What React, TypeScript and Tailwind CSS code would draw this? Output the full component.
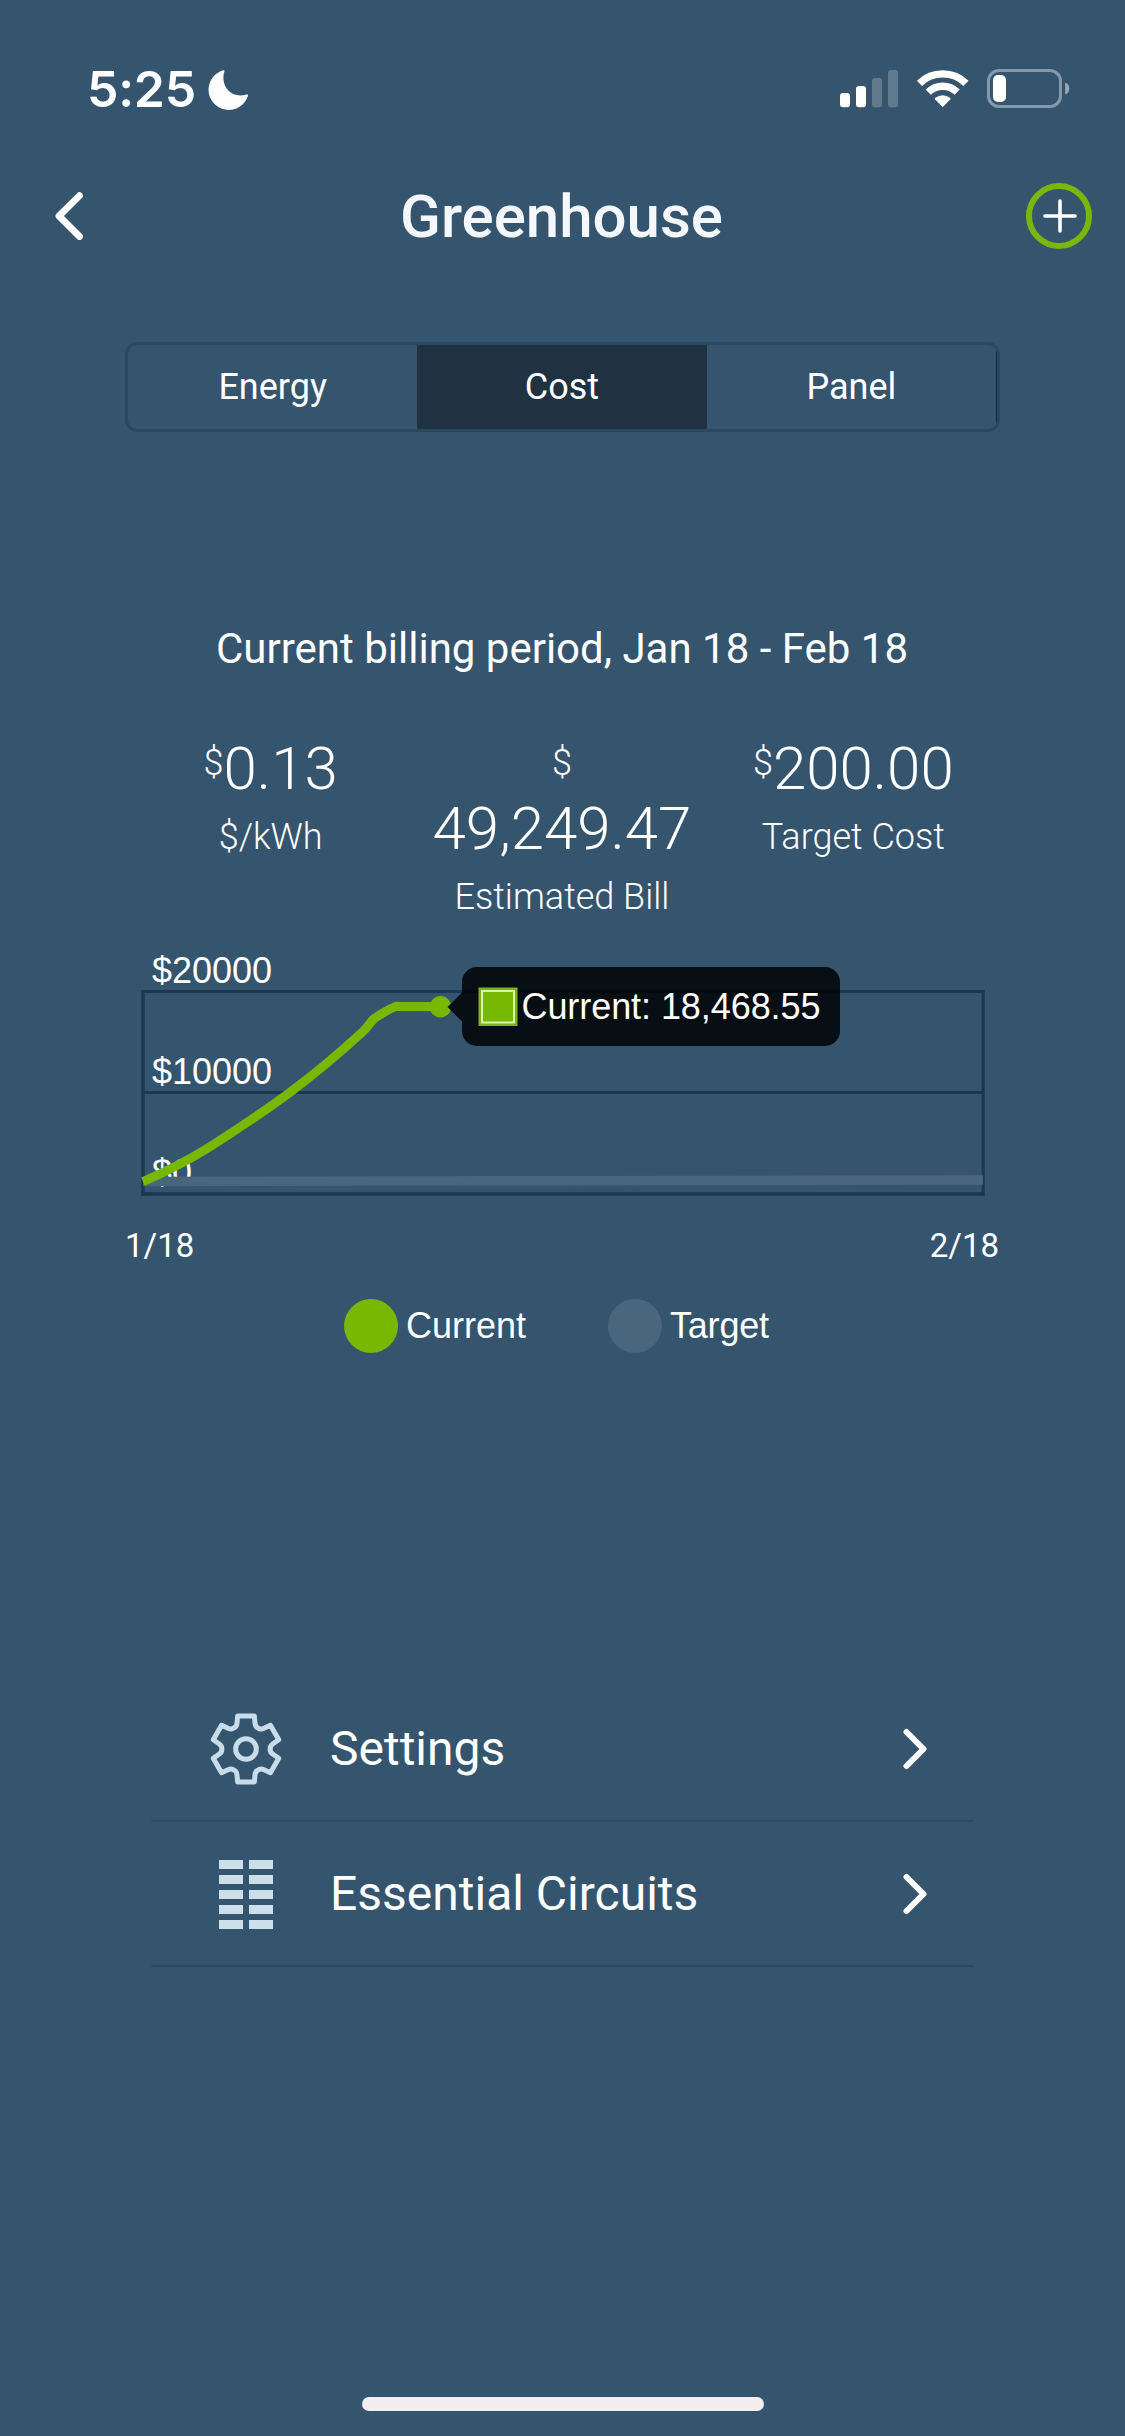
import React from "react";

const tabs = ["Energy", "Cost", "Panel"];
const stats = [
  { value: "0.13", label: "$/kWh", wrap: false },
  { value: "49,249.47", label: "Estimated Bill", wrap: true },
  { value: "200.00", label: "Target Cost", wrap: false },
];

function gearPath() {
  const rot = (x: number, y: number, k: number) => {
    const a = (k * Math.PI) / 3;
    return `${(x * Math.cos(a) - y * Math.sin(a)).toFixed(2)} ${(x * Math.sin(a) + y * Math.cos(a)).toFixed(2)}`;
  };
  let d = `M${rot(-27, -78, 0)}`;
  for (let k = 0; k < 6; k++) {
    d += `L${rot(-25, -99, k)}L${rot(25, -99, k)}L${rot(27, -78, k)}`;
    d += `Q${rot(28, -66, k)} ${rot(36.5, -63, k)}Q${rot(-28, -66, k + 1)} ${rot(-27, -78, k + 1)}`;
  }
  return d + "Z";
}

function Gear() {
  return (
    <svg className="h-[72px] w-[72px]" viewBox="-108 -108 216 216" fill="none" stroke="#c9dcea" strokeWidth="15" strokeLinejoin="round">
      <path d={gearPath()} />
      <circle r="31" />
    </svg>
  );
}

function Breakers() {
  return (
    <div className="mt-[2px] grid h-[69px] w-[54px] grid-cols-2 gap-[6px]">
      {Array.from({ length: 10 }, (_, i) => (
        <span key={i} className="h-[9px] bg-[#cddfeb]" />
      ))}
    </div>
  );
}

function StatusBar() {
  return (
    <div className="flex h-[178px] items-center justify-between pr-[55px] pl-[87px]">
      <div className="flex items-center gap-[13px]">
        <span className="w-[108px] font-[Inter,sans-serif] text-[50px] leading-[60px] font-semibold tracking-[-0.3px] whitespace-nowrap">5:25</span>
        <svg className="h-[42px] w-[42px]" viewBox="208 68 42 42" fill="white">
          <path d="M223.5 70.2 C224.4 69.9 224.8 70.6 224.4 71.6 C220 84.500 230 99.500 246.500 94.600 C248 94.200 248.400 95 247.900 96.100 A20.200 20.200 0 1 1 223.500 70.200Z" />
        </svg>
      </div>
      <div className="flex items-center">
        <svg className="h-[40px] w-[230px]" viewBox="840 69 230 40">
          <g fill="white">
            <rect x="840" y="93" width="10" height="14.200" rx="3" />
            <rect x="856" y="86" width="10" height="21.200" rx="3" />
            <g fillOpacity="0.22">
              <rect x="872" y="78" width="10" height="29.200" rx="3" />
              <rect x="888" y="70" width="10" height="37.200" rx="3" />
            </g>
            <path d="M942.700 107.200 L935 99.200 Q934.600 98.400 935.300 97.800 A12 12 0 0 1 950.100 97.800 Q950.800 98.400 950.400 99.200Z" />
            <rect x="993" y="75" width="13" height="27" rx="5" />
            <path d="M1065.200 82.500 Q1069.200 84 1069.200 88.500 T1065.200 94.500Z" fillOpacity="0.5" />
          </g>
          <g fill="none" stroke="white">
            <path d="M919.500 83.300 A33.300 33.300 0 0 1 965.900 83.300" strokeWidth="7.400" />
            <path d="M928.200 92.200 A20.700 20.700 0 0 1 957.200 92.200" strokeWidth="7.400" />
            <rect x="988.500" y="70.500" width="72" height="36" rx="10.500" strokeWidth="3" strokeOpacity="0.4" />
          </g>
        </svg>
      </div>
    </div>
  );
}

function Chart() {
  return (
    <svg className="mt-[11px] block h-[276px] w-full font-['Liberation_Sans',Arial,sans-serif]" viewBox="125 939 874 276" fontSize="36">
      <g fill="none" stroke="#1f3650">
        <path d="M143 991.500H983M143 1092.500H983" strokeWidth="3" />
        <path d="M141.500 1194H984.500" strokeWidth="3.400" />
        <path d="M143 990V1195.500" strokeWidth="3.400" />
        <path d="M983.200 990V1195.500" strokeWidth="3" />
      </g>
      <g fill="white">
        <text x="152" y="983">$20000</text>
        <text x="152" y="1084">$10000</text>
        <text x="152" y="1185">$0</text>
      </g>
      <path d="M143 1181.500L983 1180" stroke="#4a667d" strokeWidth="9.500" />
      <path
        d="M143 1181.700 C165 1172 189 1160 210 1146.700 S254 1118.700 290 1092.300 C320 1070 345 1048 363 1031.500 C371 1024 370 1020 378 1016 C384 1012.500 390 1008.500 396.500 1006.300 C405 1006.800 424 1006.500 441 1006.700"
        fill="none"
        stroke="#76b900"
        strokeWidth="9"
      />
      <circle cx="440.500" cy="1006.700" r="10.700" fill="#76b900" />
      <path
        d="M477 967H825A15 15 0 0 1 840 982V1031A15 15 0 0 1 825 1046H477A15 15 0 0 1 462 1031V1021.500L447.500 1007L462 992.500V982A15 15 0 0 1 477 967Z"
        fill="#080f14"
      />
      <path d="M462 991.500H840" stroke="#04080d" strokeWidth="2.600" />
      <rect x="478.500" y="987.500" width="39" height="38.500" fill="#7cb01e" />
      <rect x="482" y="991" width="32" height="31.500" fill="#76b900" stroke="#d9f5a8" strokeWidth="2" />
      <text x="521.500" y="1019" fill="white" textLength="299">Current: 18,468.55</text>
    </svg>
  );
}

function MenuRow({ icon, label }: { icon: React.ReactNode; label: string }) {
  return (
    <div className="flex h-[145px] items-center border-b-2 border-[#2d4c64]">
      <div className="flex w-[179px] justify-center pl-[11px]">{icon}</div>
      <span className="flex-1 pt-px text-[48px] leading-[60px]">{label}</span>
      <svg className="mr-[44px] h-[42px] w-[28px]" viewBox="902 1728 28 42" fill="none" stroke="white" strokeWidth="6" strokeLinecap="round" strokeLinejoin="round">
        <path d="M906.500 1732L923.500 1749L906.500 1766" />
      </svg>
    </div>
  );
}

export default function App() {
  return (
    <div className="flex h-[2436px] w-[1125px] flex-col bg-[#35556e] font-[Roboto,sans-serif] text-white">
      <StatusBar />
      <header className="flex h-[76px] items-center justify-between pr-[33px] pl-[54px]">
        <svg className="h-[50px] w-[66px]" viewBox="54 191 66 50" fill="none" stroke="white" strokeWidth="6.800" strokeLinecap="round" strokeLinejoin="round">
          <path d="M79.500 195.700L59 216L79.500 236.500" />
        </svg>
        <h1 className="pt-px pr-[23px] text-[60px] leading-[76px] font-medium text-[#f4f8fc]">Greenhouse</h1>
        <div className="flex h-[66px] w-[66px] items-center justify-center rounded-full border-[6px] border-[#76b80c]">
          <svg className="ml-[2px] h-[34px] w-[34px]" viewBox="0 0 34 34" stroke="white" strokeWidth="3.600" strokeLinecap="round">
            <path d="M17 2V32M2 17H32" />
          </svg>
        </div>
      </header>

      <main className="mt-[88px] ml-[125px] flex w-[874px] flex-col">
        <nav className="-mr-px flex h-[90px] overflow-hidden rounded-[12px] border-[3px] border-[#2c485f]">
          {tabs.map((t) => (
            <div
              key={t}
              className={
                "flex flex-1 items-center justify-center text-[36px] leading-none " +
                (t === "Cost" ? "bg-[#203242]" : t === "Panel" ? "border-r border-[#12293f]" : "")
              }
            >
              {t}
            </div>
          ))}
        </nav>

        <p className="mt-[187px] text-center text-[42px] leading-[60px]">Current billing period, Jan 18 - Feb 18</p>

        <section className="mt-[60px] flex h-[189px] text-center font-light">
          {stats.map((s) => (
            <div key={s.label} className="flex flex-1 flex-col gap-[8px]">
              <div className={s.wrap ? "flex flex-col text-[60px] leading-[60px]" : "flex justify-center text-[60px] leading-[60px]"}>
                <span className={s.wrap ? "h-[60px] text-[36px] leading-[48px]" : "text-[36px] leading-[48px]"}>$</span>
                <span>{s.value}</span>
              </div>
              <div className="text-[36px] leading-[60px]">{s.label}</div>
            </div>
          ))}
        </section>

        <Chart />

        <div className="flex h-[60px] items-center justify-between pt-[2px] text-[33px] leading-[60px]">
          <span>1/18</span>
          <span>2/18</span>
        </div>

        <div className="mt-[24px] flex h-[54px] items-center pl-[219px] font-['Liberation_Sans',Arial,sans-serif] text-[36px] leading-[54px]">
          <div className="flex w-[264px] items-center gap-2">
            <span className="h-[54px] w-[54px] rounded-full bg-[#76b900]" />
            <span>Current</span>
          </div>
          <div className="flex items-center gap-2">
            <span className="h-[54px] w-[54px] rounded-full bg-[#4a667d]" />
            <span className="tracking-[-0.2px]">Target</span>
          </div>
        </div>
      </main>

      <div className="mt-[324px] ml-[151px] flex w-[823px] flex-col">
        <MenuRow icon={<Gear />} label="Settings" />
        <MenuRow icon={<Breakers />} label="Essential Circuits" />
      </div>

      <div className="mx-auto mt-auto mb-[25px] h-[14px] w-[402px] rounded-full bg-[#f4edf0]" />
    </div>
  );
}
